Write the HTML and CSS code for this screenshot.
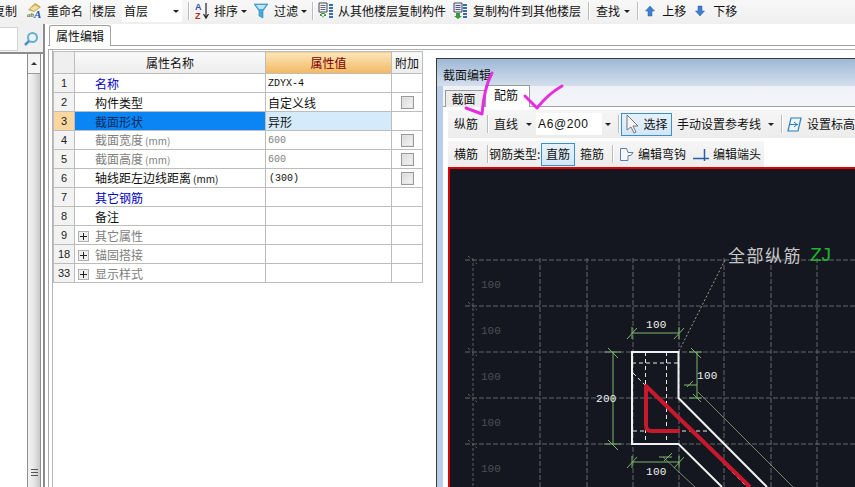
FILE: index.html
```html
<!DOCTYPE html>
<html lang="zh">
<head>
<meta charset="utf-8">
<title>属性编辑</title>
<link rel="stylesheet" href="styles.css">
</head>
<body>
<div class="app">
  <header class="toolbar">
    <span class="first">复制</span>
    <svg class="ml10" width="15" height="18" viewBox="0 0 15 18"><path d="M1 8 8 1l6 4-7 5z" fill="#c9a64a"/><path d="M3 7 8 3l4 2.500-5 3.500z" fill="#efe0a0"/><text x="0" y="15" class="ic-ab">ab</text><text x="7" y="16" class="ic-a">A</text></svg>
    <span class="ml5">重命名</span>
    <i class="sep ml7"></i>
    <span class="ml1">楼层</span>
    <div class="combo ml6 w60"><span>首层</span><i class="caret"></i></div>
    <i class="sep ml6"></i>
    <svg class="ml5" width="16" height="18" viewBox="0 0 16 18"><text x="1" y="8" class="ic-az b">A</text><text x="1" y="17" class="ic-az r">Z</text><path d="M12 1v14M9.500 12l2.500 4 2.500-4" fill="none" stroke="#222" stroke-width="1.200"/></svg>
    <span class="ml4">排序</span><i class="caret ml3"></i>
    <svg class="ml8" width="14" height="16" viewBox="0 0 14 16"><path d="M0 1h14L9 8v7L5 13V8z" fill="#4ca8d8" stroke="#2a86b8" stroke-width=".6"/><path d="M2 2h10L9 6H5z" fill="#bfe6f5"/></svg>
    <span class="ml6">过滤</span><i class="caret ml3"></i>
    <i class="sep ml6"></i>
    <svg class="ml5" width="16" height="18" viewBox="0 0 16 18"><path d="M1 1h8v9H1z" fill="#f4f4f4" stroke="#445"/><path d="M2.500 3.500h5M2.500 5.500h5M2.500 7.500h5" stroke="#667"/><path d="M2 12h6v2H2z M3 11l2 5 2-5" fill="#3a9a3a"/><path d="M11 3h4M11 6h4M11 9h4M11 12h4M11 15h4" stroke="#3a6ea8" stroke-width="2"/></svg>
    <span class="ml4">从其他楼层复制构件</span>
    <svg class="ml7" width="15" height="18" viewBox="0 0 15 18"><path d="M1 1h8v9H1z" fill="#e8eef8" stroke="#446"/><path d="M2.500 3.500h5M2.500 5.500h5M2.500 7.500h5" stroke="#557"/><path d="M3 11h4v3h2l-4 3-4-3h2z" fill="#3a9a3a"/><path d="M10 3h4M10 6h4M10 9h4M10 12h4M10 15h4" stroke="#3a6ea8" stroke-width="2"/></svg>
    <span class="ml5">复制构件到其他楼层</span>
    <i class="sep ml7"></i>
    <span class="ml7">查找</span><i class="caret ml4"></i>
    <i class="sep ml8"></i>
    <svg class="ml7" width="10" height="12" viewBox="0 0 10 12"><path d="M5 1l4.500 5H7v5H3V6H.5z" fill="#3f7fd0" stroke="#2a5fa8" stroke-width=".5"/></svg>
    <span class="ml7">上移</span>
    <svg class="ml9" width="10" height="12" viewBox="0 0 10 12"><path d="M5 11L.5 6H3V1h4v5h2.500z" fill="#3f7fd0" stroke="#2a5fa8" stroke-width=".5"/></svg>
    <span class="ml8">下移</span>
  </header>

  <div class="main">
    <aside class="left">
      <div class="search">
        <div class="search-box"></div>
        <svg width="16" height="16" viewBox="0 0 16 16"><circle cx="9.500" cy="6.500" r="4.500" fill="#e8f4fa" stroke="#6aaed0" stroke-width="2"/><path d="M6 10l-4 4" stroke="#4f93bb" stroke-width="2.500"/></svg>
      </div>
      <div class="scrollbar">
        <div class="scroll-up"><i class="up-arrow"></i></div>
        <div class="scroll-thumb"><i class="grip"></i></div>
      </div>
    </aside>

    <section class="right">
      <div class="tabbar"><div class="tab-main">属性编辑</div></div>
      <div class="frame">
        <div class="content">
          <table class="grid">
            <colgroup><col class="c-num"><col class="c-name"><col class="c-val"><col class="c-add"></colgroup>
            <thead>
              <tr><th class="corner"></th><th>属性名称</th><th class="val-head">属性值</th><th>附加</th></tr>
            </thead>
            <tbody>
              <tr><td class="num">1</td><td class="name link">名称</td><td class="value mono">ZDYX-4</td><td></td></tr>
              <tr><td class="num">2</td><td class="name">构件类型</td><td class="value">自定义线</td><td class="add"><i class="check"></i></td></tr>
              <tr class="sel"><td class="num">3</td><td class="name">截面形状</td><td class="value">异形</td><td></td></tr>
              <tr class="dim"><td class="num">4</td><td class="name">截面宽度<small>(mm)</small></td><td class="value mono">600</td><td class="add"><i class="check"></i></td></tr>
              <tr class="dim"><td class="num">5</td><td class="name">截面高度<small>(mm)</small></td><td class="value mono">600</td><td class="add"><i class="check"></i></td></tr>
              <tr><td class="num">6</td><td class="name">轴线距左边线距离<small>(mm)</small></td><td class="value mono indent">(300)</td><td class="add"><i class="check"></i></td></tr>
              <tr><td class="num">7</td><td class="name link">其它钢筋</td><td></td><td></td></tr>
              <tr><td class="num">8</td><td class="name">备注</td><td></td><td></td></tr>
              <tr class="dim"><td class="num">9</td><td class="name tree"><i class="plus"></i>其它属性</td><td></td><td></td></tr>
              <tr class="dim"><td class="num">18</td><td class="name tree"><i class="plus"></i>锚固搭接</td><td></td><td></td></tr>
              <tr class="dim"><td class="num">33</td><td class="name tree"><i class="plus"></i>显示样式</td><td></td><td></td></tr>
            </tbody>
          </table>

          <div class="dialog">
            <div class="dlg-title">截面编辑</div>
            <div class="dlg-body">
              <div class="dlg-tabs"><div class="dtab">截面</div><div class="dtab on">配筋</div></div>
              <div class="dlg-panel">
                <div class="row row1">
                  <span>纵筋</span>
                  <i class="sep ml9"></i>
                  <span class="ml6">直线</span><i class="caret ml8"></i>
                  <div class="combo ml5 w66"><span class="mono-lg">A6@200</span></div><i class="caret ml3"></i>
                  <i class="sep ml8"></i>
                  <div class="btn ml2 w51">
                    <svg width="14" height="20" viewBox="0 0 14 20"><path d="M1 1v15l4-3 3 6 2-1-3-6h5z" fill="#f4f4f4" stroke="#777"/></svg>
                    <span>选择</span>
                  </div>
                  <span class="ml5">手动设置参考线</span><i class="caret ml7"></i>
                  <i class="sep ml8"></i>
                  <svg class="ml5" width="15" height="15" viewBox="0 0 15 15"><path d="M4 1h10l-3 13H1z" fill="#eef6fc" stroke="#2f7fb8" stroke-width="1.200"/><path d="M3 7.500h8M7 5l3 2.500L7 10" fill="none" stroke="#2f7fb8"/></svg>
                  <span class="ml5">设置标高</span>
                </div>
                <div class="row row2">
                  <span>横筋</span>
                  <i class="sep ml9"></i>
                  <span class="ml1 w52">钢筋类型:</span>
                  <div class="btn w34"><span>直筋</span></div>
                  <span class="ml5">箍筋</span>
                  <i class="sep ml8"></i>
                  <svg class="ml6" width="15" height="15" viewBox="0 0 15 15"><path d="M1.500 1.500h6l1.500 4h5l-2 3h-3v5h-7.500z" fill="#f6f8fb" stroke="#5a7fa8"/></svg>
                  <span class="ml4">编辑弯钩</span>
                  <svg class="ml7" width="16" height="15" viewBox="0 0 16 15"><path d="M0 11.500h16" stroke="#2a5fa8" stroke-width="1.500"/><path d="M11.500 2v12" stroke="#2a5fa8" stroke-width="1.500"/></svg>
                  <span class="ml4">编辑端头</span>
                </div>
                <div class="canvas">
                  <svg class="drawing" width="405" height="318" viewBox="450 169 405 318">
                    <g class="gridlines">
                      <path d="M465 260H855M465 306H855M465 352H855M465 398H855M465 444H855"/>
                      <path d="M540 258V487M587 258V487M633 258V487M679 258V487M724 258V487M771 258V487M817 258V487"/>
                    </g>
                    <g class="ruler">
                      <path d="M473 258V487"/>
                      <path d="M468 256l9 8M468 302l9 8M468 348l9 8M468 394l9 8M468 440l9 8"/>
                    </g>
                    <g class="ruler-text">
                      <text x="481" y="288">100</text><text x="481" y="334">100</text><text x="481" y="380">100</text><text x="481" y="426">100</text><text x="481" y="472">100</text>
                    </g>
                    <path class="leader" d="M679 351 725 260"/>
                    <text class="callout" x="728" y="262">全部纵筋</text>
                    <text class="callout-zj" x="810" y="261">ZJ</text>
                    <g class="dims">
                      <path d="M632 333H679M632 327V339M679 327V339M627 339l10-11M674 339l10-11"/>
                      <path d="M632 462H679M632 456V468M679 456V468M627 468l10-11M674 468l10-11M659 457h13M664 461l8-8"/>
                      <path d="M613 352V444M604 352h17M604 444h17M608 348l10 10M608 440l10 10"/>
                      <path d="M697 352V398M689 352h13M684 385h13M689 398h13M691 348l10 10M693 381l-6 6M693 394l8 8"/>
                      <path class="thin" d="M698 392 793 487M663 457 695 487"/>
                    </g>
                    <g class="dim-text">
                      <text x="646" y="328">100</text><text x="646" y="475">100</text><text x="596" y="402">200</text><text x="697" y="379">100</text>
                    </g>
                    <path class="inner" d="M632 363H678M645.500 352V444M666.500 352V444M633 431H710M633 373 747 487"/>
                    <path class="outline" d="M722 487 678.500 444H632V352H678.500V398L767 487"/>
                    <path class="rebar" d="M680 431H651q-5 0-5-6V386L750 487"/>
                  </svg>
                </div>
              </div>
            </div>
          </div>
        </div>
      </div>
    </section>
  </div>

  <svg class="ink" width="855" height="487" viewBox="0 0 855 487">
    <path d="M492 73Q484 88 482 114L466 108"/>
    <path d="M525 96 537 108Q548 94 562 86"/>
  </svg>
</div>
</body>
</html>
```
FILE: styles.css
```css
* { box-sizing: border-box; }
html, body { margin: 0; padding: 0; background: #fff; }
body { font: 12px/16px "Noto Sans CJK SC", "Liberation Sans", sans-serif; color: #111; }
i { display: block; flex: none; }
svg { display: block; flex: none; }
span { flex: none; white-space: nowrap; }

.app { position: relative; width: 855px; height: 487px; overflow: hidden; display: flex; flex-direction: column; }

.ml1 { margin-left: 1px; } .ml2 { margin-left: 2px; } .ml3 { margin-left: 3px; } .ml4 { margin-left: 4px; }
.ml5 { margin-left: 5px; } .ml6 { margin-left: 6px; } .ml7 { margin-left: 7px; } .ml8 { margin-left: 8px; }
.ml9 { margin-left: 9px; } .ml10 { margin-left: 10px; }
.w34 { width: 34px; } .w51 { width: 51px; } .w52 { width: 52px; } .w60 { width: 60px; } .w66 { width: 66px; }

.toolbar { height: 24px; flex: none; display: flex; align-items: center; padding-bottom: 2px; background: linear-gradient(#f8f8f8, #efefef); white-space: nowrap; }
.first { margin-left: -7px; }
.sep { width: 1px; height: 18px; background: #bcbcbc; box-shadow: 1px 0 0 #fff; }
.caret { width: 0; height: 0; margin-right: -1px; border: 3px solid transparent; border-top: 3px solid #222; border-bottom: 0; }
.combo { height: 22px; background: #fff; display: flex; align-items: center; justify-content: space-between; padding: 0 2px; }
.combo .caret { margin-right: 1px; }
.ic-ab { font: italic bold 7px "Liberation Serif", serif; fill: #5a7a40; }
.ic-a { font: bold italic 11px "Liberation Serif", serif; fill: #2a55a8; }
.ic-az { font: bold 9px "Liberation Sans", sans-serif; }
.ic-az.b { fill: #2a55a8; }
.ic-az.r { fill: #b03020; }

.main { flex: 1; display: flex; min-height: 0; }

.left { width: 45px; flex: none; display: flex; flex-direction: column; border-right: 2px solid #8c8c8c; background: #fff; }
.search { height: 30px; flex: none; display: flex; align-items: center; gap: 5px; border-bottom: 2px solid #8c8c8c; background: #f0f0f0; padding-top: 2px; }
.search-box { width: 18px; height: 24px; background: #fff; border: 1px solid #d4d4d4; border-left: 0; }
.scrollbar { flex: 1; margin-left: 27px; width: 14px; display: flex; flex-direction: column; border-left: 1px solid #8f8f8f; border-right: 1px solid #8f8f8f; background: #f0f0f0; }
.scroll-up { height: 19px; flex: none; display: flex; align-items: center; justify-content: center; background: #f4f4f4; }
.up-arrow { width: 0; height: 0; border: 3px solid transparent; border-bottom: 3px solid #333; border-top: 0; }
.scroll-thumb { flex: 1; position: relative; background: linear-gradient(90deg, #f4f4f4, #e8e8e8 45%, #c8c8c8); border-top: 1px solid #9a9a9a; }
.grip { position: absolute; left: 3px; bottom: 10px; width: 7px; height: 8px; background: repeating-linear-gradient(#555 0 1px, transparent 1px 3px); }

.right { flex: 1; min-width: 0; margin-left: 3px; display: flex; flex-direction: column; background: #fff; }
.tabbar { height: 22px; flex: none; padding: 1px 0 0 1px; border-bottom: 1px solid #a0a0a0; display: flex; }
.tab-main { width: 62px; height: 21px; text-align: center; line-height: 19px; background: #fff; border: 1px solid #a0a0a0; border-bottom: 0; border-top-left-radius: 3px; border-top-right-radius: 3px; }
.frame { flex: 1; margin-top: 3px; padding-left: 3px; border-top: 1px solid #b0b0b0; border-left: 1px solid #a8a8a8; min-height: 0; }
.content { height: 100%; display: flex; align-items: flex-start; padding-top: 1px; border-left: 1px solid #b4b4b4; }

.grid { width: 369px; flex: none; table-layout: fixed; border-collapse: collapse; background: #fff; }
.c-num { width: 21px; } .c-name { width: 191px; } .c-val { width: 126px; } .c-add { width: 31px; }
.grid th, .grid td { border: 1px solid #bdbdbd; padding: 0; height: 19px; line-height: 16px; overflow: hidden; white-space: nowrap; font-weight: 400; }
.grid th { height: 22px; text-align: center; background: linear-gradient(#fafafa, #ececec); }
.grid th.corner { background: #efefef; }
.grid th.val-head { background: linear-gradient(#fbe6bb, #f2b862); color: #7a0000; }
.num { text-align: center; background: #f3f3f3; color: #222; font: 11px/16px "Liberation Sans", sans-serif; }
.grid td.name { padding: 1px 0 0 20px; }
.name small { font-size: 10px; margin-left: 2px; }
.link { color: #0000c4; }
.grid td.value { padding: 1px 0 0 2px; }
.mono { font: 10px/16px "Liberation Mono", monospace; }
.grid td.indent { padding-left: 3px; }
.dim { color: #808080; }
.sel .num { background: #fbd79f; }
.sel .name { background: #0b84f4; color: #0a2a5a; }
.sel .value { background: #d5eafb; }
.add { text-align: center; }
.check { width: 13px; height: 13px; margin: 0 auto; border: 1px solid #9a9a9a; background: linear-gradient(135deg, #d8d8d8, #f6f6f6); box-shadow: inset 0 0 0 1px #e4e4e4; }
.grid td.tree { padding-left: 3px; color: #808080; }
.tree .plus { display: inline-block; }
.plus { position: relative; width: 11px; height: 11px; margin-right: 6px; vertical-align: -1px; border: 1px solid #b0b0b0; background: linear-gradient(90deg, #222, #222) center/7px 1px no-repeat, linear-gradient(#222, #222) center/1px 7px no-repeat, #eee; }

.dialog { flex: none; width: 440px; height: 440px; margin: 7px 0 0 13px; border: 1px solid #3a3a3a; background: #b9cde6; }
.dlg-title { height: 27px; padding: 8px 0 0 6px; line-height: 16px; background: linear-gradient(#9fb8d6, #d3dfed); }
.dlg-body { margin-left: 6px; background: linear-gradient(#eef2f7, #f3f5f8 21px, transparent 21px); height: 400px; }
.dlg-tabs { height: 21px; display: flex; align-items: flex-end; padding-left: 2px; position: relative; z-index: 1; }
.dtab { width: 40px; height: 17px; padding-right: 3px; text-align: center; line-height: 16px; background: #ececec; border: 1px solid #9a9a9a; border-bottom: 0; }
.dtab.on { width: 45px; height: 22px; line-height: 18px; background: #fff; }
.dlg-panel { height: 400px; background: #fff; border-top: 1px solid #a0a0a0; margin-top: -1px; padding: 3px 0 0 5px; }
.row { display: flex; align-items: center; padding-left: 6px; }
.row1 { height: 28px; background: linear-gradient(#f6f6f6, #ececec); }
.row2 { height: 26px; margin-top: 3px; width: 316px; background: linear-gradient(#f6f6f6, #ececec); }
.btn { height: 23px; flex: none; display: flex; align-items: center; justify-content: center; gap: 4px; background: linear-gradient(#e6f2fc, #d2e6f8); border: 1px solid #3d90cf; }
.mono-lg { font: 12px/16px "Liberation Sans", sans-serif; letter-spacing: .6px; }

.canvas { height: 320px; border: 2px solid #e00000; border-right: 0; border-bottom: 0; background: #14171f; }
.drawing { background: #14171f; }
.gridlines path { fill: none; stroke: #62666a; stroke-width: 1; stroke-dasharray: 5 2; }
.ruler path { fill: none; stroke: #5a5e62; stroke-width: 1; stroke-dasharray: 3 2; }
.ruler-text text { font: 11px "Liberation Mono", monospace; fill: #4c5054; }
.leader { fill: none; stroke: #9a9a9a; stroke-dasharray: 2 2; }
.callout { font: 17px "Noto Sans CJK SC", sans-serif; letter-spacing: 1.500px; fill: #c8c8c8; }
.callout-zj { font: 20px "Liberation Mono", monospace; fill: #22b030; letter-spacing: -2px; }
.dims path { fill: none; stroke: #7cb46c; stroke-width: 1; }
.dims path.thin { stroke: #8ea87e; stroke-width: .8; }
.dim-text text { font: 11px "Liberation Mono", monospace; fill: #f0f0f0; letter-spacing: .3px; }
.inner { fill: none; stroke: #e8e8e8; stroke-dasharray: 4 3; }
.outline { fill: none; stroke: #f0f0f0; stroke-width: 2; }
.rebar { fill: none; stroke: #c8182c; stroke-width: 4; stroke-linejoin: round; }

.ink { position: absolute; left: 0; top: 0; z-index: 5; pointer-events: none; }
.ink path { fill: none; stroke: #e52ee0; stroke-width: 3; stroke-linecap: round; stroke-linejoin: round; }
```
